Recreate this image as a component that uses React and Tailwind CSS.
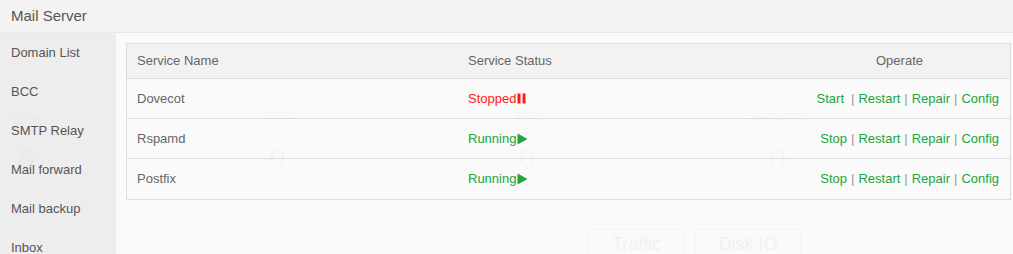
import React from "react";

const sideItems = ["Domain List", "BCC", "SMTP Relay", "Mail forward", "Mail backup", "Inbox"];

const services = [
    { name: "Dovecot", running: false },
    { name: "Rspamd", running: true },
    { name: "Postfix", running: true },
];

const PauseIcon = () => (
    <svg width="9" height="11" viewBox="0 0 9 11" className="ml-px">
        <rect x="0.5" y="0.5" width="3" height="10" fill="#ff1a1a" />
        <rect x="5.5" y="0.5" width="3" height="10" fill="#ff1a1a" />
    </svg>
);

const PlayIcon = () => (
    <svg width="11" height="12" viewBox="0 0 11 12" className="ml-px">
        <path d="M0.5 0.5 L10.5 6 L0.5 11.5 Z" fill="#20a53a" />
    </svg>
);

const Sep = () => <span className="text-[#999] mx-[4px]">|</span>;

const App = () => {
    return (
        <div className="relative w-[1013px] h-[254px] overflow-hidden bg-[#fafafa] text-[13px] text-[#666]" style={{ fontFamily: '"Liberation Sans", Arial, sans-serif' }}>
            {/* HEADER */}
            <div className="h-[33px] bg-[#f3f3f3] border-b border-[#e8e8e8] flex items-center pl-[11px] text-[15px] text-[#555]">
                Mail Server
            </div>

            <div className="flex h-[221px]">
                {/* SIDEBAR */}
                <div className="w-[116px] bg-[#ededed] shrink-0">
                    {sideItems.map((item) => (
                        <div key={item} className="h-[39px] flex items-center pl-[11px] text-[13px] text-[#555]">{item}</div>
                    ))}
                </div>

                {/* CONTENT */}
                <div className="flex-1 pt-[10px] pl-[10px] pr-[2px]">
                    <div className="border border-[#ddd] bg-[#fafafa]">
                        <div className="flex h-[35px] items-center bg-[#f2f2f2] border-b border-[#ddd]">
                            <div className="w-[331px] pl-[10px]">Service Name</div>
                            <div className="w-[331px] pl-[10px]">Service Status</div>
                            <div className="flex-1 text-center">Operate</div>
                        </div>
                        {services.map((s, i) => (
                            <div key={s.name} className={`flex h-[40px] items-center ${i < services.length - 1 ? "border-b border-[#ddd]" : ""}`}>
                                <div className="w-[331px] pl-[10px]">{s.name}</div>
                                <div className="w-[331px] pl-[10px] flex items-center">
                                    {s.running ? (
                                        <><span className="text-[#20a53a]">Running</span><PlayIcon /></>
                                    ) : (
                                        <><span className="text-[#ff1a1a]">Stopped</span><PauseIcon /></>
                                    )}
                                </div>
                                <div className="flex-1 text-right pr-[11px] text-[#20a53a] whitespace-nowrap">
                                    {s.running ? <span>Stop</span> : <span className="mr-[3px]">Start</span>}
                                    <Sep /><span>Restart</span><Sep /><span>Repair</span><Sep /><span>Config</span>
                                </div>
                            </div>
                        ))}
                    </div>
                </div>
            </div>

            {/* faint page behind the overlay */}
            <div className="absolute inset-0 pointer-events-none">
                <div className="absolute left-[12px] top-[106px] text-[17px] text-[#20a53a]/[0.04]">Site</div>
                <div className="absolute left-[18px] top-[136px] text-[30px] text-[#20a53a]/[0.05]">6</div>
                <div className="absolute left-[263px] top-[106px] text-[17px] text-[#20a53a]/[0.035]">FTP</div>
                <div className="absolute left-[269px] top-[136px] text-[30px] text-[#20a53a]/[0.04]">0</div>
                <div className="absolute left-[516px] top-[106px] text-[17px] text-[#20a53a]/[0.035]">DB</div>
                <div className="absolute left-[519px] top-[136px] text-[30px] text-[#20a53a]/[0.04]">0</div>
                <div className="absolute left-[747px] top-[104px] text-[17px] text-[#20a53a]/[0.035]">Security</div>
                <div className="absolute left-[769px] top-[136px] text-[30px] text-[#20a53a]/[0.04]">0</div>
                <div className="absolute left-[588px] top-[229px] w-[97px] h-[25px] border-t border-x border-[#f3f3f3] flex justify-center pt-[3px] text-[18px] leading-[22px] text-[#f1f1f1]">Traffic</div>
                <div className="absolute left-[695px] top-[229px] w-[106px] h-[25px] border-t border-x border-[#f3f3f3] flex justify-center pt-[3px] text-[18px] leading-[22px] text-[#f1f1f1]">Disk IO</div>
            </div>
        </div>
    );
};

export default App;
